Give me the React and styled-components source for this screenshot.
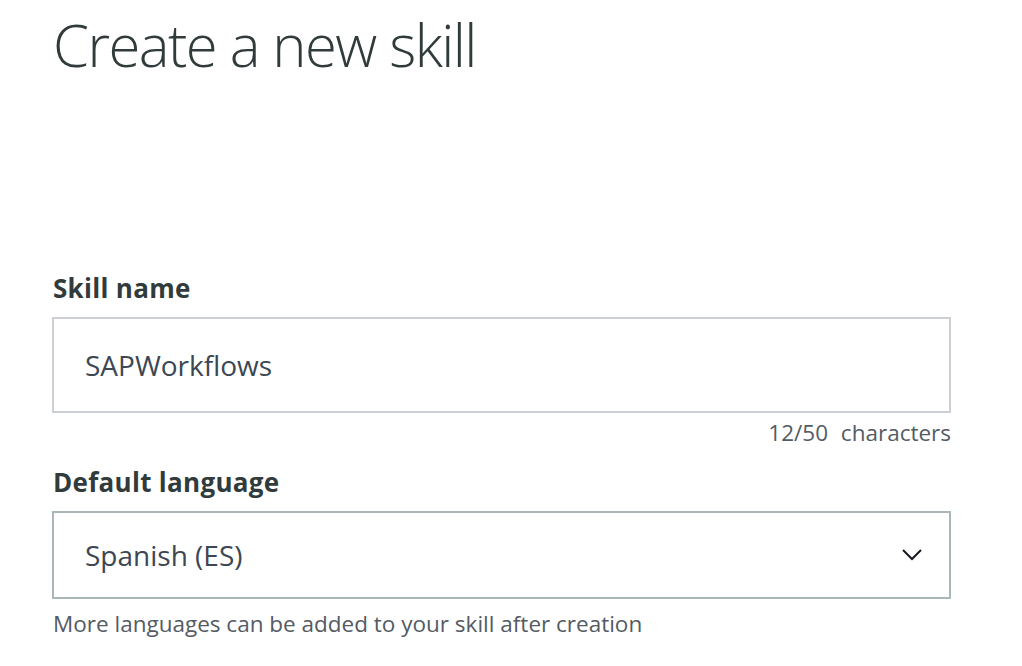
import React from "react";
import styled, { createGlobalStyle } from "styled-components";

const Global = createGlobalStyle`
  html, body { margin: 0; padding: 0; background: #ffffff; }
  body { font-family: "Open Sans", "Liberation Sans", sans-serif; color: #16191f; }
`;

const Page = styled.main`
  width: 899px;
  padding: 9px 0 0 52px;
  display: flex;
  flex-direction: column;
`;

const Title = styled.h1`
  margin: 0 0 0 1px;
  font-size: 58px;
  font-weight: 300;
  line-height: 72px;
  color: #313b3b;
  letter-spacing: -1.55px;
`;

const Field = styled.section`
  display: flex;
  flex-direction: column;
  margin-top: ${(p) => p.$top}px;
`;

const Label = styled.label`
  font-size: 26px;
  font-weight: 700;
  line-height: 32px;
  letter-spacing: 0.3px;
  color: #313b3b;
  margin: 0 0 13px 1px;
`;

const Box = styled.div`
  box-sizing: border-box;
  height: ${(p) => p.$h}px;
  border: 2px solid ${(p) => p.$border};
  display: flex;
  align-items: center;
  justify-content: space-between;
  padding: 0 26px 0 31px;
  font-size: 28px;
  color: #3d4753;
`;

const Counter = styled.div`
  align-self: flex-end;
  font-size: 22.5px;
  line-height: 28px;
  color: #545b64;
  margin-top: 6px;
  word-spacing: 7px;
`;

const Hint = styled.div`
  font-size: 22.5px;
  line-height: 28px;
  color: #545b64;
  margin: 11px 0 0 1px;
`;

const Chevron = () => (
  <svg width="22" height="14" viewBox="0 0 22 14" fill="none">
    <path d="M2 2 L11 11 L20 2" stroke="#16191f" strokeWidth="2" />
  </svg>
);

export default function App() {
  return (
    <>
      <Global />
      <Page>
        <Title>Create a new skill</Title>
        <Field $top={191}>
          <Label>Skill name</Label>
          <Box $h={96} $border="#ccd0d5">SAPWorkflows</Box>
          <Counter>12/50 characters</Counter>
        </Field>
        <Field $top={19}>
          <Label>Default language</Label>
          <Box $h={88} $border="#aab7b8">
            <span>Spanish (ES)</span>
            <Chevron />
          </Box>
          <Hint>More languages can be added to your skill after creation</Hint>
        </Field>
      </Page>
    </>
  );
}
